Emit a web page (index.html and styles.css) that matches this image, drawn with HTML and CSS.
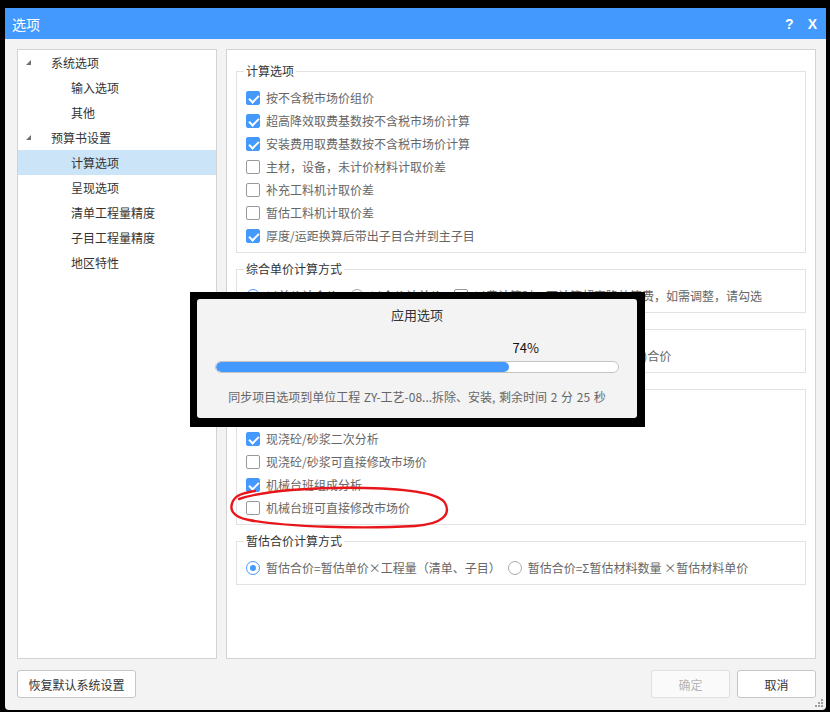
FILE: index.html
```html
<!DOCTYPE html>
<html lang="zh-CN">
<head>
    <meta charset="UTF-8">
    <title>选项</title>
    <link rel="stylesheet" href="styles.css">
</head>
<body>
    <div class="window">
        <div class="titlebar">
            <span>选项</span>
            <span class="title-btns"><span>?</span><span>X</span></span>
        </div>

        <div class="main">
            <!-- Left tree -->
            <div class="tree-panel">
                <div class="node"><span class="caret"></span>系统选项</div>
                <div class="node leaf">输入选项</div>
                <div class="node leaf">其他</div>
                <div class="node"><span class="caret"></span>预算书设置</div>
                <div class="node leaf selected">计算选项</div>
                <div class="node leaf">呈现选项</div>
                <div class="node leaf">清单工程量精度</div>
                <div class="node leaf">子目工程量精度</div>
                <div class="node leaf">地区特性</div>
            </div>

            <!-- Right options -->
            <div class="opts-panel">
                <fieldset>
                    <legend>计算选项</legend>
                    <div class="opt on"><span class="box"></span>按不含税市场价组价</div>
                    <div class="opt on"><span class="box"></span>超高降效取费基数按不含税市场价计算</div>
                    <div class="opt on"><span class="box"></span>安装费用取费基数按不含税市场价计算</div>
                    <div class="opt"><span class="box"></span>主材，设备，未计价材料计取价差</div>
                    <div class="opt"><span class="box"></span>补充工料机计取价差</div>
                    <div class="opt"><span class="box"></span>暂估工料机计取价差</div>
                    <div class="opt on"><span class="box"></span>厚度/运距换算后带出子目合并到主子目</div>
                </fieldset>

                <fieldset>
                    <legend>综合单价计算方式</legend>
                    <div class="row tight">
                        <div class="opt on"><span class="radio"></span>以单价计合价</div>
                        <div class="opt"><span class="radio"></span>以合价计单价</div>
                        <div class="opt"><span class="box"></span>以费计算时，不计算超高降效等费，如需调整，请勾选</div>
                    </div>
                </fieldset>

                <fieldset>
                    <legend>综合合价计算方式</legend>
                    <div class="row">
                        <div class="opt on"><span class="radio"></span>综合合价=综合单价×工程量</div>
                        <div class="opt"><span class="radio"></span>综合合价=Σ(分部分项+单价措施项目)合价</div>
                    </div>
                </fieldset>

                <fieldset>
                    <legend>配比材料设置</legend>
                    <div class="opt on"><span class="box"></span>商品砼/砂浆二次分析</div>
                    <div class="opt on"><span class="box"></span>现浇砼/砂浆二次分析</div>
                    <div class="opt"><span class="box"></span>现浇砼/砂浆可直接修改市场价</div>
                    <div class="opt on"><span class="box"></span>机械台班组成分析</div>
                    <div class="opt"><span class="box"></span>机械台班可直接修改市场价</div>
                </fieldset>

                <fieldset>
                    <legend>暂估合价计算方式</legend>
                    <div class="row near">
                        <div class="opt on"><span class="radio"></span>暂估合价=暂估单价×工程量（清单、子目）</div>
                        <div class="opt"><span class="radio"></span>暂估合价=Σ暂估材料数量 ×暂估材料单价</div>
                    </div>
                </fieldset>
            </div>
        </div>

        <div class="footer">
            <button class="btn wide">恢复默认系统设置</button>
            <div class="spacer"></div>
            <button class="btn" disabled>确定</button>
            <button class="btn">取消</button>
        </div>

        <svg class="grip" width="8" height="8" viewBox="0 0 8 8">
            <rect x="6" y="0" width="2" height="2" fill="#a0a0a0"/>
            <rect x="3" y="3" width="2" height="2" fill="#a0a0a0"/>
            <rect x="6" y="3" width="2" height="2" fill="#a0a0a0"/>
            <rect x="0" y="6" width="2" height="2" fill="#a0a0a0"/>
            <rect x="3" y="6" width="2" height="2" fill="#a0a0a0"/>
            <rect x="6" y="6" width="2" height="2" fill="#a0a0a0"/>
        </svg>
    </div>

    <!-- progress popup -->
    <div class="overlay">
        <div class="progress-card">
            <div class="progress-title">应用选项</div>
            <div class="percent">74%</div>
            <div class="bar"><div class="fill" style="width: 73%"></div></div>
            <div class="status">同步项目选项到单位工程 ZY-工艺-08...拆除、安装, 剩余时间 2 分 25 秒</div>
        </div>
    </div>

    <!-- red hand-drawn mark -->
    <svg class="scribble" width="232" height="54" viewBox="0 0 232 54">
        <path d="M 14 17 C 40 8, 95 5, 140 6 C 185 7, 214 11, 220 21 C 226 32, 218 42, 190 44 C 140 47, 60 45, 24 38 C 7 35, 4 27, 8 19 C 11 13, 18 11, 30 9"
              fill="none" stroke="#e8161b" stroke-width="2.4" stroke-linecap="round"/>
    </svg>
</body>
</html>
```

FILE: styles.css
```css
* {
    box-sizing: border-box;
}

body {
    margin: 0;
    padding: 8px 0 0 5px;
    width: 830px;
    height: 712px;
    background: #000;
    position: relative;
    overflow: hidden;
    font-family: "Noto Sans CJK SC", "Noto Sans", sans-serif;
    font-size: 12px;
}

.window {
    width: 821px;
    height: 702px;
    background: #f3f3f3;
    border-radius: 0 0 4px 4px;
    display: flex;
    flex-direction: column;
    position: relative;
}

.titlebar {
    height: 31px;
    background: #4499ff;
    color: #fff;
    font-size: 14px;
    display: flex;
    align-items: center;
    justify-content: space-between;
    padding: 0 9px 0 7px;
}

.title-btns {
    display: flex;
    gap: 14px;
    font-family: "Liberation Sans", sans-serif;
    font-weight: bold;
    font-size: 14px;
}

.main {
    display: flex;
    gap: 9px;
    padding: 10px 10px 0 12px;
    height: 620px;
}

/* Tree */
.tree-panel {
    width: 200px;
    background: #fff;
    border: 1px solid #d3d3d3;
}

.node {
    height: 25px;
    display: flex;
    align-items: center;
    padding-left: 8px;
    color: #333;
}

.node.leaf {
    padding-left: 53px;
}

.node.selected {
    background: #cce4f7;
}

.caret {
    width: 0;
    height: 0;
    border-left: 5px solid transparent;
    border-bottom: 5px solid #707070;
    margin-right: 20px;
}

/* Options */
.opts-panel {
    width: 590px;
    background: #fff;
    border: 1px solid #d3d3d3;
    padding: 13px 9px 0 9px;
}

fieldset {
    margin: 0 0 8px;
    padding: 7px 8px 5px 9px;
    border: 1px solid #e2e2e2;
    min-width: 0;
}

legend {
    padding: 0 2px;
    margin-left: -2px;
    line-height: 16px;
    color: #333;
}

.row {
    display: flex;
    gap: 14px;
}

.row.tight {
    gap: 12px;
}

.row.near {
    gap: 7px;
}

.opt {
    height: 23px;
    display: flex;
    align-items: center;
    color: #666;
    white-space: nowrap;
}

.box {
    width: 14px;
    height: 14px;
    border: 1px solid #999;
    border-radius: 2px;
    background: #fff;
    margin-right: 6px;
    position: relative;
    flex: none;
}

.opt.on .box {
    background: #4499ff;
    border-color: #4499ff;
}

.opt.on .box::after {
    content: "";
    position: absolute;
    left: 4px;
    top: 1px;
    width: 4px;
    height: 8px;
    border: solid #fff;
    border-width: 0 2px 2px 0;
    transform: rotate(45deg);
}

.radio {
    width: 14px;
    height: 14px;
    border: 1px solid #aaa;
    border-radius: 50%;
    background: #fff;
    margin-right: 6px;
    position: relative;
    flex: none;
}

.opt.on .radio {
    border-color: #4499ff;
}

.opt.on .radio::after {
    content: "";
    position: absolute;
    left: 3px;
    top: 3px;
    width: 6px;
    height: 6px;
    border-radius: 50%;
    background: #4499ff;
}

/* Footer */
.footer {
    display: flex;
    gap: 7px;
    padding: 11px 10px 0 12px;
}

.spacer {
    flex: 1;
}

.btn {
    height: 28px;
    width: 79px;
    background: #fff;
    border: 1px solid #c6c6c6;
    border-radius: 3px;
    font-family: inherit;
    font-size: 12px;
    color: #333;
    padding: 0;
}

.btn.wide {
    width: 119px;
}

.btn:disabled {
    color: #b5b5b5;
    border-color: #e0e0e0;
    background: #fafafa;
}

.grip {
    position: absolute;
    right: 3px;
    bottom: 3px;
}

/* Progress popup */
.overlay {
    position: absolute;
    left: 190px;
    top: 292px;
    width: 455px;
    height: 135px;
    background: #000;
    padding: 7px 8px 9px 7px;
}

.progress-card {
    height: 100%;
    background: #f3f3f3;
    border-radius: 3px;
    padding: 6px 18px 0 18px;
}

.progress-title {
    text-align: center;
    line-height: 20px;
    color: #333;
    font-size: 13px;
}

.percent {
    margin-top: 13px;
    line-height: 20px;
    text-align: right;
    padding-right: 80px;
    color: #111;
    font-size: 13px;
}

.bar {
    margin-top: 3px;
    height: 12px;
    background: #fff;
    border: 1px solid #c4c4c4;
    border-radius: 6px;
    overflow: hidden;
}

.fill {
    height: 100%;
    background: #4499ff;
    border-radius: 6px;
}

.status {
    margin-top: 14px;
    line-height: 20px;
    text-align: center;
    color: #666;
    word-spacing: 1px;
}

.scribble {
    position: absolute;
    left: 225px;
    top: 482px;
}
```
